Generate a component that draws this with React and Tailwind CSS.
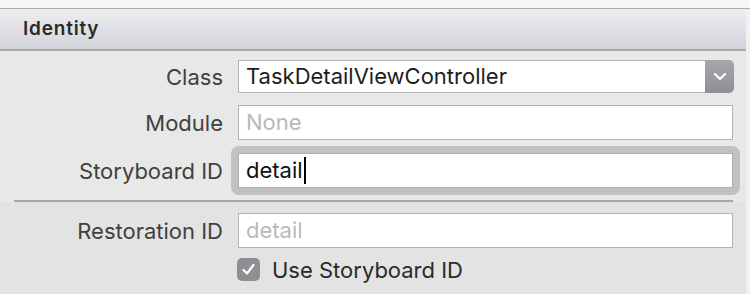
import React from "react";

const font = { fontFamily: "Inter, 'Liberation Sans', sans-serif" };

function Label({ children }) {
  return (
    <div className="w-[223px] shrink-0 text-right text-[22px] text-[#404040] leading-none">
      {children}
    </div>
  );
}

export default function App() {
  return (
    <div className="w-[750px] h-[294px] bg-[#f6f6f6] flex overflow-hidden" style={font}>
      <div className="w-[746px] shrink-0 flex flex-col">
        <div className="h-[8px] bg-[#f6f6f6] border-b border-[#ababab] box-content" />
        <div className="h-[40px] bg-gradient-to-b from-[#eeeef1] to-[#d2d4db] border-b-2 border-[#a9a9a9] flex items-center pl-[23px] box-content">
          <span className="text-[19px] font-semibold text-[#2b2b2b] tracking-[0.8px]">Identity</span>
        </div>
        <div className="bg-[#e8e8e8] flex flex-col pt-[9px]">
          <div className="flex items-center h-[33px]">
            <Label>Class</Label>
            <div className="ml-[15px] flex h-[33px] w-[496px]">
              <div className="flex-1 bg-white border border-r-0 border-[#b3b3b3] flex items-center pl-[7px] text-[22px] text-[#1e1e1e]">
                TaskDetailViewController
              </div>
              <div className="w-[29px] rounded-r-[5px] bg-gradient-to-b from-[#a6a6ab] to-[#8e8e93] flex items-center justify-center">
                <svg width="14" height="9" viewBox="0 0 14 9" fill="none">
                  <path d="M2 2 L7 7 L12 2" stroke="white" strokeWidth="2.2" strokeLinecap="round" strokeLinejoin="round" />
                </svg>
              </div>
            </div>
          </div>
          <div className="flex items-center h-[35px] mt-[12px]">
            <Label>Module</Label>
            <div className="ml-[15px] h-[35px] w-[495px] bg-white border border-[#b3b3b3] flex items-center pl-[7px] text-[22px] text-[#b8b8b8]">
              None
            </div>
          </div>
          <div className="flex items-center h-[49px] mt-[6px]">
            <Label>Storyboard ID</Label>
            <div className="ml-[8px] w-[509px] h-[49px] p-[7px] rounded-[8px] bg-[#c1c1c1]">
              <div className="h-full w-full bg-white border border-[#b0b0b0] flex items-center pl-[7px] text-[22px] text-[#111]">
                detail
                <span className="inline-block w-[2px] h-[27px] bg-black ml-[1px]" />
              </div>
            </div>
          </div>
          <div className="h-[5px]" />
          <div className="h-[2px] ml-[14px] w-[719px] bg-[#a7a7a7]" />
        </div>
        <div className="flex-1 bg-[#e3e3e3] flex flex-col pt-[11px]">
          <div className="flex items-center h-[35px]">
            <Label>Restoration ID</Label>
            <div className="ml-[15px] h-[35px] w-[495px] bg-white border border-[#b3b3b3] flex items-center pl-[7px] text-[22px] text-[#bababa]">
              detail
            </div>
          </div>
          <div className="flex items-center mt-[10px] ml-[237px]">
            <div className="w-[23px] h-[23px] rounded-[5px] bg-[#8e8e93] flex items-center justify-center">
              <svg width="15" height="13" viewBox="0 0 15 13" fill="none">
                <path d="M2.5 7 L6 10.5 L12.5 2" stroke="white" strokeWidth="2.2" strokeLinecap="round" strokeLinejoin="round" />
              </svg>
            </div>
            <span className="ml-[12px] text-[22px] text-[#2a2a2a] leading-none">Use Storyboard ID</span>
          </div>
        </div>
      </div>
      <div className="flex-1 flex flex-col">
        <div className="h-[8px] border-b border-[#ababab] box-content" />
        <div className="flex-1 bg-[#f1f1f1]" />
      </div>
    </div>
  );
}
